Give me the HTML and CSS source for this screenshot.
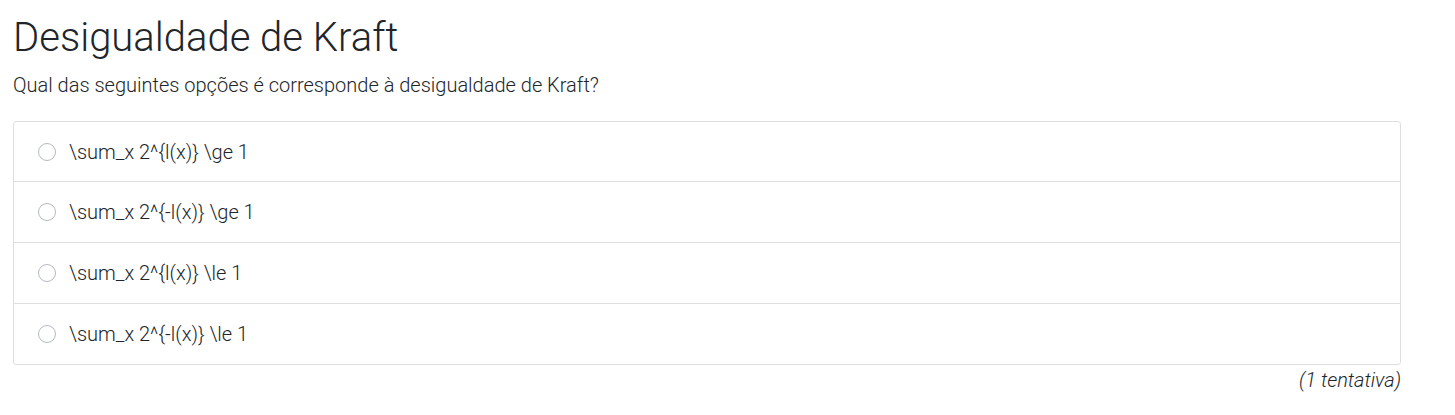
FILE: index.html
```html
<!DOCTYPE html>
<html lang="pt">
<head>
<meta charset="utf-8">
<link rel="stylesheet" href="styles.css">
</head>
<body>
<main class="quiz">
  <h1 class="quiz-title">Desigualdade de Kraft</h1>
  <p class="quiz-question">Qual das seguintes opções é corresponde à desigualdade de Kraft?</p>
  <ul class="options">
    <li class="option"><span class="radio"></span><span class="option-text">\sum_x 2^{l(x)} \ge 1</span></li>
    <li class="option"><span class="radio"></span><span class="option-text">\sum_x 2^{-l(x)} \ge 1</span></li>
    <li class="option"><span class="radio"></span><span class="option-text">\sum_x 2^{l(x)} \le 1</span></li>
    <li class="option"><span class="radio"></span><span class="option-text">\sum_x 2^{-l(x)} \le 1</span></li>
  </ul>
  <div class="attempts">(1 tentativa)</div>
</main>
</body>
</html>
```
FILE: styles.css
```css
* { box-sizing: border-box; }
html, body { margin: 0; padding: 0; background: #fff; }
body {
  font-family: Roboto, "Liberation Sans", sans-serif;
  font-weight: 300;
  color: #212529;
}
.quiz {
  width: 1388px;
  margin-left: 13px;
  padding-top: 14px;
}
.quiz-title {
  margin: 0;
  font-size: 40px;
  font-weight: 300;
  line-height: 48px;
}
.quiz-question {
  margin: 8px 0 0 0;
  font-size: 20px;
  line-height: 30px;
}
.options {
  list-style: none;
  margin: 21px 0 0;
  padding: 0;
  border: 1px solid #dfdfdf;
  border-radius: 3px;
}
.option {
  display: flex;
  align-items: center;
  height: 61px;
  padding-left: 24px;
  border-top: 1px solid #dfdfdf;
  font-size: 20px;
}
.option:first-child { border-top: none; height: 59px; }
.radio {
  width: 18px;
  height: 18px;
  border: 1px solid #b3bac2;
  border-radius: 50%;
  margin-right: 13px;
  flex: none;
}
.attempts {
  text-align: right;
  font-style: italic;
  font-size: 20px;
  line-height: 30px;
  margin-top: 0;
}
```
